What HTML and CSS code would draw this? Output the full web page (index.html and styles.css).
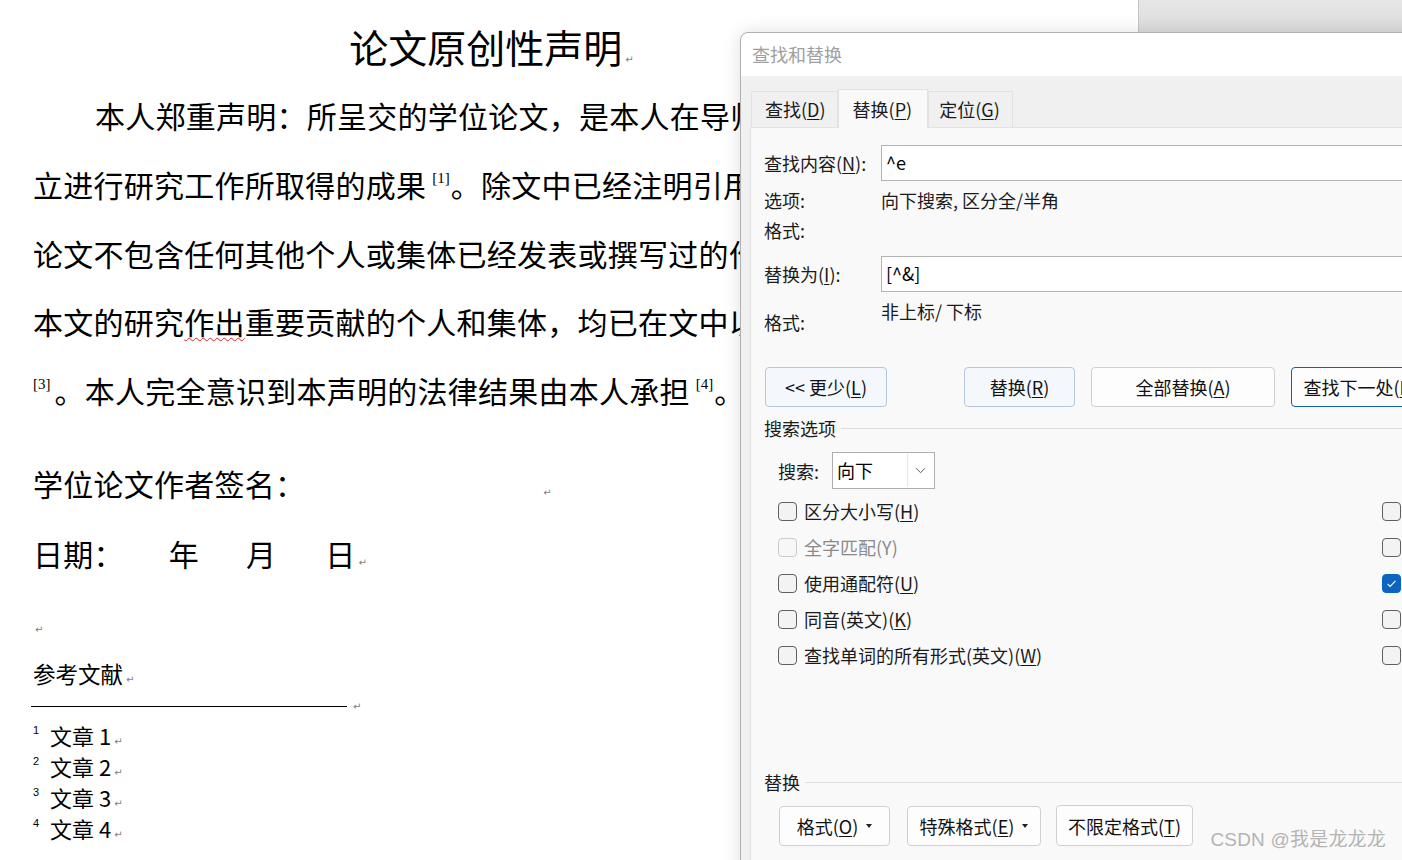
FILE: index.html
```html
<!DOCTYPE html>
<html lang="zh-CN">
<head>
<meta charset="utf-8">
<title>论文原创性声明 - 查找和替换</title>
<link rel="stylesheet" href="styles.css">
</head>
<body>
<main class="doc">
  <h1 class="title">论文原创性声明<span class="pm">↵</span></h1>
  <div class="para">
    <p class="first">本人郑重声明：所呈交的学位论文，是本人在导师指导下独</p>
    <p>立进行研究工作所取得的成果<sup class="ref">[1]</sup>。除文中已经注明引用的内容外，本</p>
    <p>论文不包含任何其他个人或集体已经发表或撰写过的作品成果<sup class="ref">[2]</sup>。对</p>
    <p>本文的研究<span class="wavy">作出</span>重要贡献的个人和集体，均已在文中以明确方式标明</p>
    <p><sup class="ref ref-start">[3]</sup>。本人完全意识到本声明的法律结果由本人承担<sup class="ref">[4]</sup>。<span class="pm">↵</span></p>
  </div>
  <p class="sign">学位论文作者签名：<span class="pm sign-pm">↵</span></p>
  <p class="date">日期：<span class="yr">年</span><span class="mo">月</span><span class="dy">日</span><span class="pm">↵</span></p>
  <p class="empty"><span class="pm">↵</span></p>
  <p class="refhead">参考文献<span class="pm">↵</span></p>
  <div class="rule"><span class="rule-line"></span><span class="pm">↵</span></div>
  <ol class="notes">
    <li><span class="num">1</span>文章 1<span class="pm">↵</span></li>
    <li><span class="num">2</span>文章 2<span class="pm">↵</span></li>
    <li><span class="num">3</span>文章 3<span class="pm">↵</span></li>
    <li><span class="num">4</span>文章 4<span class="pm">↵</span></li>
  </ol>
</main>

<div class="backwin"></div>

<section class="dialog">
  <header class="dlg-title">查找和替换</header>
  <nav class="tabs">
    <div class="tab t1">查找(<u>D</u>)</div>
    <div class="tab active">替换(<u>P</u>)</div>
    <div class="tab t3">定位(<u>G</u>)</div>
  </nav>
  <div class="panel">
    <div class="field">
      <span class="lbl">查找内容(<u>N</u>):</span>
      <div class="input">^e</div>
    </div>
    <div class="info first-info"><span class="lbl">选项:</span><span>向下搜索, 区分全/半角</span></div>
    <div class="info"><span class="lbl">格式:</span></div>
    <div class="field field2">
      <span class="lbl">替换为(<u>I</u>):</span>
      <div class="input">[^&amp;]</div>
    </div>
    <div class="info2"><span class="lbl">格式:</span><span class="val">非上标/ 下标</span></div>

    <div class="actions">
      <div class="btn soft b-less">&lt;&lt; 更少(<u>L</u>)</div>
      <div class="btn soft b-rep">替换(<u>R</u>)</div>
      <div class="btn b-all">全部替换(<u>A</u>)</div>
      <div class="btn primary b-next">查找下一处(<u>F</u>)</div>
    </div>

    <div class="group-head">搜索选项</div>
    <div class="search-row">
      <span class="s-lbl">搜索:</span>
      <div class="select">
        <span class="sel-val">向下</span>
        <span class="sel-btn"><svg width="11" height="7" viewBox="0 0 11 7"><path d="M1 1.2l4.5 4.5 4.5-4.5" fill="none" stroke="#5a5a5a" stroke-width="1"/></svg></span>
      </div>
    </div>

    <div class="checks">
      <div class="chk"><span class="box"></span>区分大小写(<u>H</u>)</div>
      <div class="chk"><span class="box"></span></div>
      <div class="chk disabled"><span class="box"></span>全字匹配(Y)</div>
      <div class="chk"><span class="box"></span></div>
      <div class="chk"><span class="box"></span>使用通配符(<u>U</u>)</div>
      <div class="chk"><span class="box on"><svg width="19" height="19" viewBox="0 0 19 19"><path d="M5.5 9.8l2.6 2.6 5.4-5.6" fill="none" stroke="#fff" stroke-width="1.1"/></svg></span></div>
      <div class="chk"><span class="box"></span>同音(英文)(<u>K</u>)</div>
      <div class="chk"><span class="box"></span></div>
      <div class="chk"><span class="box"></span>查找单词的所有形式(英文)(<u>W</u>)</div>
      <div class="chk"><span class="box"></span></div>
    </div>

    <div class="group-head replace-head">替换</div>
    <div class="fmt-buttons">
      <div class="btn f1">格式(<u>O</u>)<span class="caret"></span></div>
      <div class="btn f2">特殊格式(<u>E</u>)<span class="caret"></span></div>
      <div class="btn f3">不限定格式(<u>T</u>)</div>
    </div>
  </div>
</section>

<div class="watermark">CSDN @我是龙龙龙</div>
</body>
</html>
```

FILE: styles.css
```css
html, body {
  margin: 0;
  padding: 0;
  background: #ffffff;
  overflow: hidden;
}

body {
  position: relative;
  width: 1402px;
  height: 860px;
  font-family: "Noto Sans CJK SC", "Noto Sans", sans-serif;
  color: #000;
}

/* ---------- document ---------- */
.doc {
  width: 917px;
  padding: 16px 0 0 33px;
}

.title {
  margin: 0 0 5px;
  font-size: 39px;
  font-weight: 400;
  line-height: 60px;
  text-align: center;
  white-space: nowrap;
}

.pm {
  font-family: "DejaVu Sans", sans-serif;
  font-size: 10px;
  line-height: 1;
  color: #7d7d7d;
  letter-spacing: 0;
  margin-left: 3px;
}

.para p {
  margin: 0;
  font-size: 30px;
  letter-spacing: 0.25px;
  line-height: 68.75px;
  white-space: nowrap;
}

.para p.first {
  padding-left: 62px;
}

.ref {
  font-family: "Liberation Serif", serif;
  font-size: 15px;
  line-height: 0;
  letter-spacing: 0;
  vertical-align: 14px;
  padding: 0 1px 0 6px;
}

.ref-start {
  padding-left: 0;
  padding-right: 4px;
}

.wavy {
  text-decoration: underline wavy #e02020;
  text-decoration-thickness: 1px;
  text-underline-offset: 3px;
}

.sign, .date {
  margin: 0;
  font-size: 30px;
  letter-spacing: 0.25px;
  line-height: 70px;
  white-space: nowrap;
}

.sign {
  margin-top: 23px;
}

.sign-pm {
  margin-left: 238px;
}

.yr { margin-left: 45px; }
.mo { margin-left: 47px; }
.dy { margin-left: 49px; }

.empty {
  margin: 26px 0 0;
  line-height: 30px;
  height: 30px;
  font-size: 10px;
}

.empty .pm {
  margin-left: 2px;
}

.refhead {
  margin: 12px 0 0;
  font-size: 22.5px;
  line-height: 34px;
  white-space: nowrap;
}

.rule {
  display: flex;
  align-items: center;
  height: 10px;
  margin-top: 12px;
  margin-left: -2px;
}

.rule-line {
  display: block;
  width: 316px;
  height: 1px;
  background: #000;
}

.rule .pm {
  margin-left: 6px;
  line-height: 10px;
}

.notes {
  list-style: none;
  margin: 8px 0 0;
  padding: 0;
}

.notes li {
  display: flex;
  align-items: baseline;
  font-size: 22px;
  line-height: 31px;
  height: 31px;
  white-space: pre;
}

.notes .num {
  width: 17px;
  font-family: "Liberation Sans", sans-serif;
  font-size: 11px;
  line-height: 1;
  position: relative;
  top: -11px;
}

/* ---------- window behind ---------- */
.backwin {
  position: absolute;
  top: 0;
  left: 1138px;
  right: 0;
  height: 32px;
  box-sizing: border-box;
  border-left: 1px solid #c4c4c4;
  background: linear-gradient(#e6e6e6, #dcdcdc);
}

/* ---------- dialog ---------- */
.dialog {
  position: absolute;
  left: 740px;
  top: 32px;
  width: 720px;
  height: 860px;
  box-sizing: border-box;
  border: 1px solid #b0b0b0;
  border-radius: 8px 8px 0 0;
  background: #f0f0f0;
  box-shadow: 0 0 18px rgba(0, 0, 0, 0.13);
  font-size: 18px;
  color: #1b1b1b;
  overflow: hidden;
}

.dlg-title {
  height: 43px;
  line-height: 42px;
  padding-left: 11px;
  background: #ffffff;
  color: #a0a0a0;
  font-size: 18px;
  border-radius: 8px 8px 0 0;
}

.tabs {
  display: flex;
  align-items: flex-end;
  height: 51px;
  padding-left: 10px;
  background: #f0f0f0;
}

.tab {
  height: 36px;
  line-height: 35px;
  box-sizing: border-box;
  padding: 0 11px 0 13px;
  border: 1px solid #e2e2e2;
  border-bottom: none;
  background: #f0f0f0;
  margin-bottom: 0;
}

.tab.active {
  height: 39px;
  line-height: 39px;
  padding: 0 15px 0 14px;
  background: #f9f9f9;
  margin-bottom: -1px;
  position: relative;
  z-index: 1;
}

.tab.t3 {
  padding: 0 12px 0 10px;
}

.tab u, .lbl u, .btn u, .chk u {
  text-underline-offset: 2px;
  text-decoration-thickness: 1px;
}

.panel {
  margin-left: 9px;
  height: 760px;
  border-top: 1px solid #e2e2e2;
  border-left: 1px solid #e2e2e2;
  background: #f9f9f9;
  padding: 17px 0 0 13px;
}

.field {
  display: flex;
  align-items: center;
  height: 36px;
}

.lbl {
  width: 117px;
  flex: none;
  white-space: nowrap;
}

.input {
  flex: 1;
  height: 36px;
  box-sizing: border-box;
  border: 1px solid #b3b3b3;
  background: #ffffff;
  padding-left: 4px;
  line-height: 32px;
  color: #000;
  font-size: 18px;
}

.info {
  display: flex;
  line-height: 30px;
  white-space: nowrap;
}

.first-info {
  margin-top: 4px;
}

.field2 {
  margin-top: 11px;
}

.info2 {
  display: flex;
  align-items: flex-start;
  white-space: nowrap;
  height: 45px;
}

.info2 .lbl {
  margin-top: 15px;
  line-height: 30px;
}

.info2 .val {
  margin-top: 4px;
  line-height: 30px;
}

.actions {
  display: flex;
  margin-top: 30px;
  padding-left: 1px;
}

.btn {
  height: 40px;
  box-sizing: border-box;
  border: 1px solid #d0d0d0;
  border-radius: 4px;
  background: #fdfdfd;
  display: flex;
  align-items: center;
  justify-content: center;
  white-space: nowrap;
  flex: none;
  color: #111;
}

.btn.soft {
  background: #f4f8fc;
  border-color: #b7c7da;
}

.btn.primary {
  border-color: #0f62b0;
  background: #fdfdfd;
}

.b-less { width: 122px; }
.b-rep { width: 111px; margin-left: 77px; }
.b-all { width: 184px; margin-left: 16px; }
.b-next { width: 137px; margin-left: 16px; }

.group-head {
  display: flex;
  align-items: center;
  margin-top: 10px;
  line-height: 22px;
  white-space: nowrap;
}

.group-head::after {
  content: "";
  flex: 1;
  height: 1px;
  background: #dddddd;
  margin-left: 5px;
}

.search-row {
  display: flex;
  align-items: center;
  margin-top: 13px;
  padding-left: 14px;
  height: 37px;
}

.s-lbl {
  width: 54px;
}

.select {
  display: flex;
  width: 103px;
  height: 37px;
  box-sizing: border-box;
  border: 1px solid #adadad;
  background: #ffffff;
}

.sel-val {
  flex: 1;
  padding-left: 4px;
  line-height: 35px;
  color: #000;
}

.sel-btn {
  width: 25px;
  margin: 1px 1px 1px 0;
  border-left: 1px solid #e6e6e6;
  display: flex;
  align-items: center;
  justify-content: center;
}

.checks {
  display: grid;
  grid-template-columns: 604px 1fr;
  grid-auto-rows: 36px;
  margin-top: 4px;
  padding-left: 14px;
}

.chk {
  display: flex;
  align-items: center;
  white-space: nowrap;
}

.box {
  width: 19px;
  height: 19px;
  box-sizing: border-box;
  border: 1px solid #606060;
  border-radius: 4px;
  background: #f3f3f3;
  margin-right: 7px;
  flex: none;
  display: flex;
}

.box.on {
  background: #0b64bf;
  border-color: #0b64bf;
}

.box.on svg {
  margin: -1px;
}

.chk.disabled {
  color: #8a8a8a;
}

.chk.disabled .box {
  border-color: #cbcbcb;
  background: #f7f7f7;
}

.replace-head {
  margin-top: 98px;
}

.fmt-buttons {
  display: flex;
  margin-top: 13px;
  padding-left: 15px;
}

.f1 { width: 111px; }
.f2 { width: 134px; margin-left: 17px; }
.f3 { width: 137px; margin-left: 15px; height: 41px; margin-top: -1px; }

.caret {
  width: 0;
  height: 0;
  border-left: 3.5px solid transparent;
  border-right: 3.5px solid transparent;
  border-top: 4px solid #222;
  margin-left: 8px;
}

/* ---------- watermark ---------- */
.watermark {
  position: absolute;
  right: 16px;
  top: 828px;
  font-family: "Liberation Sans", "Noto Sans CJK SC", sans-serif;
  font-size: 19px;
  letter-spacing: 0.2px;
  line-height: 24px;
  color: #b4b4b4;
}
```
